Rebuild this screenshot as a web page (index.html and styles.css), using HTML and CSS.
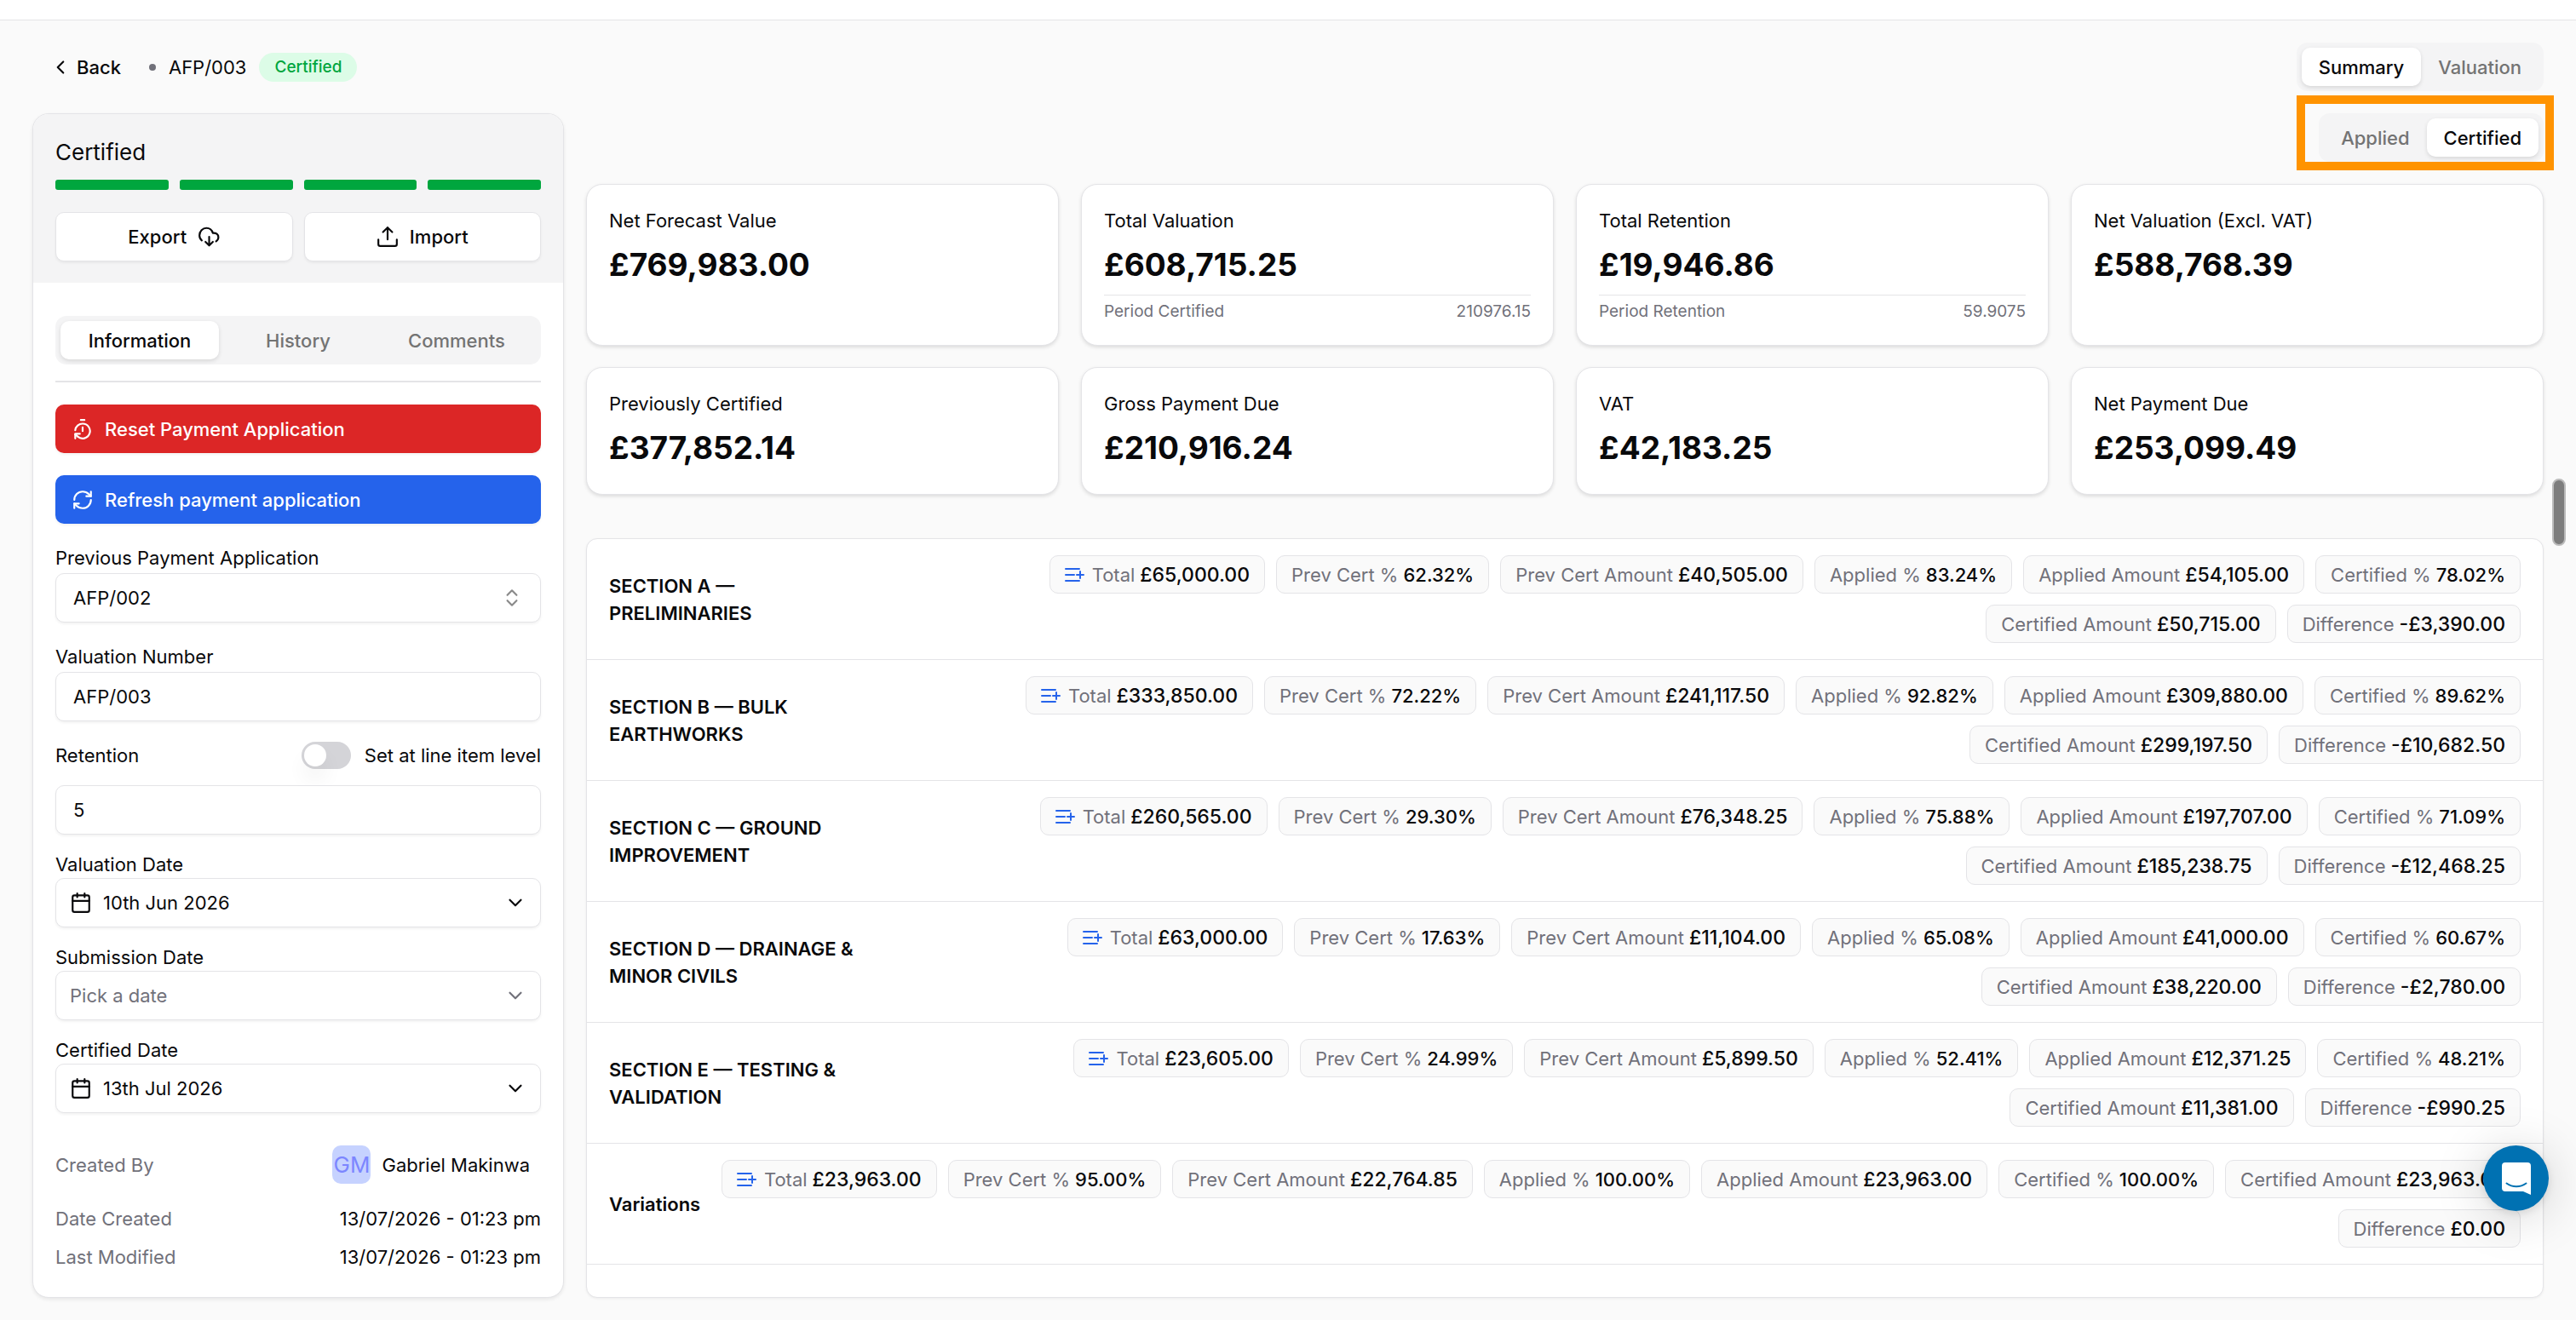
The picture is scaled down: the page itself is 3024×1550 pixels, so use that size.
FILE: index.html
```html
<!DOCTYPE html>
<html lang="en">
<head>
<meta charset="UTF-8">
<title>AFP/003 - Payment Application</title>
<link rel="stylesheet" href="styles.css">
</head>
<body>
<!-- shared icons -->
<svg class="sprite" aria-hidden="true">
	<symbol id="i-sum" viewBox="0 0 24 24"><path d="M1 5h16M1 12h10M1 19h16M18 8v8M14 12h8"/></symbol>
	<symbol id="i-down" viewBox="0 0 24 24"><path d="m6 9 6 6 6-6"/></symbol>
	<symbol id="i-cal" viewBox="0 0 24 24"><path d="M8 2v4M16 2v4M3 10h18"/><rect x="3" y="4" width="18" height="18" rx="2"/></symbol>
</svg>

<div class="topbar"></div>

<header class="head">
	<nav class="crumbs">
		<a href="#" class="back"><svg class="icon" viewBox="0 0 24 24"><path d="m15 18-6-6 6-6"/></svg>Back</a>
		<span class="dot"></span>
		<span>AFP/003</span>
		<span class="badge">Certified</span>
	</nav>
	<div class="seg">
		<button type="button" class="on">Summary</button>
		<button type="button">Valuation</button>
	</div>
</header>

<main class="page">
	<aside class="side">
		<div class="side-head">
			<h2>Certified</h2>
			<div class="steps"><i></i><i></i><i></i><i></i></div>
			<div class="pair">
				<button type="button" class="btn">Export
					<svg class="icon" viewBox="0 0 24 24"><path d="M12.500 12v9.500M8.500 17.500l4 4 4-4"/><path d="M4.500 16A7 7 0 0 1 2 10.500C2 6 5.500 2.500 9.500 2.500c3.500 0 6 2 7 5.500 3.500-.5 6 1.500 6 4.500 0 2-1 3.500-2.500 4.500"/></svg>
				</button>
				<button type="button" class="btn">
					<svg class="icon" viewBox="0 0 24 24"><path d="M12 15V2M7 7l5-5 5 5"/><path d="M2 15v5a2 2 0 0 0 2 2h16a2 2 0 0 0 2-2v-5"/></svg>
					Import
				</button>
			</div>
		</div>

		<div class="side-body">
			<div class="seg wide">
				<button type="button" class="on">Information</button>
				<button type="button">History</button>
				<button type="button">Comments</button>
			</div>
			<hr>
			<div class="actions">
				<button type="button" class="btn red">
					<svg class="icon" viewBox="0 0 24 24"><path d="M10 2h4M12 14v-4"/><path d="M4 13a8 8 0 0 1 8-7 8 8 0 1 1-5.300 14L4 17.600"/><path d="M9 17H4v5"/></svg>
					Reset Payment Application
				</button>
				<button type="button" class="btn blue">
					<svg class="icon" viewBox="0 0 24 24"><path d="M3 12a9 9 0 0 1 9-9 9.750 9.750 0 0 1 6.740 2.740L21 8"/><path d="M21 3v5h-5M21 12a9 9 0 0 1-9 9 9.750 9.750 0 0 1-6.740-2.740L3 16"/><path d="M8 16H3v5"/></svg>
					Refresh payment application
				</button>
			</div>

			<div class="field">
				<label for="prev">Previous Payment Application</label>
				<div class="control">
					<select id="prev"><option>AFP/002</option></select>
					<svg class="icon grey" viewBox="0 0 24 24"><path d="m7 15 5 5 5-5M7 9l5-5 5 5"/></svg>
				</div>
			</div>
			<div class="field">
				<label for="num">Valuation Number</label>
				<input id="num" class="control" type="text" value="AFP/003">
			</div>
			<div class="retention">
				<label for="ret">Retention</label>
				<input id="line" type="checkbox" class="switch">
				<label for="line">Set at line item level</label>
			</div>
			<input id="ret" class="control" type="text" value="5">

			<div class="date">
				<label for="vdate">Valuation Date</label>
				<button type="button" id="vdate" class="control"><svg class="icon"><use href="#i-cal"/></svg><span>10th Jun 2026</span><svg class="icon"><use href="#i-down"/></svg></button>
			</div>
			<div class="date">
				<label for="sdate">Submission Date</label>
				<button type="button" id="sdate" class="control empty"><span>Pick a date</span><svg class="icon"><use href="#i-down"/></svg></button>
			</div>
			<div class="date">
				<label for="cdate">Certified Date</label>
				<button type="button" id="cdate" class="control"><svg class="icon"><use href="#i-cal"/></svg><span>13th Jul 2026</span><svg class="icon"><use href="#i-down"/></svg></button>
			</div>

			<dl class="meta">
				<div class="by"><dt>Created By</dt><dd><span class="avatar">GM</span>Gabriel Makinwa</dd></div>
				<div><dt>Date Created</dt><dd>13/07/2026 - 01:23 pm</dd></div>
				<div><dt>Last Modified</dt><dd>13/07/2026 - 01:23 pm</dd></div>
			</dl>
		</div>
	</aside>

	<section class="content">
		<div class="mode">
			<div class="seg">
				<button type="button">Applied</button>
				<button type="button" class="on">Certified</button>
			</div>
			<div class="highlight"></div>
		</div>

		<div class="cards">
			<div class="card"><h3>Net Forecast Value</h3><strong>£769,983.00</strong></div>
			<div class="card"><h3>Total Valuation</h3><strong>£608,715.25</strong><p><span>Period Certified</span><span>210976.15</span></p></div>
			<div class="card"><h3>Total Retention</h3><strong>£19,946.86</strong><p><span>Period Retention</span><span>59.9075</span></p></div>
			<div class="card"><h3>Net Valuation (Excl. VAT)</h3><strong>£588,768.39</strong></div>
			<div class="card"><h3>Previously Certified</h3><strong>£377,852.14</strong></div>
			<div class="card"><h3>Gross Payment Due</h3><strong>£210,916.24</strong></div>
			<div class="card"><h3>VAT</h3><strong>£42,183.25</strong></div>
			<div class="card"><h3>Net Payment Due</h3><strong>£253,099.49</strong></div>
		</div>

		<div class="sections">
			<div class="row">
				<h4>SECTION A — PRELIMINARIES</h4>
				<ul>
					<li><svg class="sum"><use href="#i-sum"/></svg>Total <b class="amount">£65,000.00</b></li>
					<li>Prev Cert % <b>62.32%</b></li>
					<li>Prev Cert Amount <b class="amount">£40,505.00</b></li>
					<li>Applied % <b>83.24%</b></li>
					<li>Applied Amount <b class="amount">£54,105.00</b></li>
					<li>Certified % <b>78.02%</b></li>
					<li>Certified Amount <b class="amount">£50,715.00</b></li>
					<li>Difference <b class="amount">-£3,390.00</b></li>
				</ul>
			</div>
			<div class="row">
				<h4>SECTION B — BULK EARTHWORKS</h4>
				<ul>
					<li><svg class="sum"><use href="#i-sum"/></svg>Total <b class="amount">£333,850.00</b></li>
					<li>Prev Cert % <b>72.22%</b></li>
					<li>Prev Cert Amount <b class="amount">£241,117.50</b></li>
					<li>Applied % <b>92.82%</b></li>
					<li>Applied Amount <b class="amount">£309,880.00</b></li>
					<li>Certified % <b>89.62%</b></li>
					<li>Certified Amount <b class="amount">£299,197.50</b></li>
					<li>Difference <b class="amount">-£10,682.50</b></li>
				</ul>
			</div>
			<div class="row">
				<h4>SECTION C — GROUND IMPROVEMENT</h4>
				<ul>
					<li><svg class="sum"><use href="#i-sum"/></svg>Total <b class="amount">£260,565.00</b></li>
					<li>Prev Cert % <b>29.30%</b></li>
					<li>Prev Cert Amount <b class="amount">£76,348.25</b></li>
					<li>Applied % <b>75.88%</b></li>
					<li>Applied Amount <b class="amount">£197,707.00</b></li>
					<li>Certified % <b>71.09%</b></li>
					<li>Certified Amount <b class="amount">£185,238.75</b></li>
					<li>Difference <b class="amount">-£12,468.25</b></li>
				</ul>
			</div>
			<div class="row">
				<h4>SECTION D — DRAINAGE &amp; MINOR CIVILS</h4>
				<ul>
					<li><svg class="sum"><use href="#i-sum"/></svg>Total <b class="amount">£63,000.00</b></li>
					<li>Prev Cert % <b>17.63%</b></li>
					<li>Prev Cert Amount <b class="amount">£11,104.00</b></li>
					<li>Applied % <b>65.08%</b></li>
					<li>Applied Amount <b class="amount">£41,000.00</b></li>
					<li>Certified % <b>60.67%</b></li>
					<li>Certified Amount <b class="amount">£38,220.00</b></li>
					<li>Difference <b class="amount">-£2,780.00</b></li>
				</ul>
			</div>
			<div class="row">
				<h4>SECTION E — TESTING &amp; VALIDATION</h4>
				<ul>
					<li><svg class="sum"><use href="#i-sum"/></svg>Total <b class="amount">£23,605.00</b></li>
					<li>Prev Cert % <b>24.99%</b></li>
					<li>Prev Cert Amount <b class="amount">£5,899.50</b></li>
					<li>Applied % <b>52.41%</b></li>
					<li>Applied Amount <b class="amount">£12,371.25</b></li>
					<li>Certified % <b>48.21%</b></li>
					<li>Certified Amount <b class="amount">£11,381.00</b></li>
					<li>Difference <b class="amount">-£990.25</b></li>
				</ul>
			</div>
			<div class="row">
				<h4>Variations</h4>
				<ul>
					<li><svg class="sum"><use href="#i-sum"/></svg>Total <b class="amount">£23,963.00</b></li>
					<li>Prev Cert % <b>95.00%</b></li>
					<li>Prev Cert Amount <b class="amount">£22,764.85</b></li>
					<li>Applied % <b>100.00%</b></li>
					<li>Applied Amount <b class="amount">£23,963.00</b></li>
					<li>Certified % <b>100.00%</b></li>
					<li>Certified Amount <b class="amount">£23,963.00</b></li>
					<li>Difference <b class="amount">£0.00</b></li>
				</ul>
			</div>
		</div>
	</section>
</main>

<div class="thumb"></div>
<button type="button" class="chat" aria-label="Open chat">
	<svg viewBox="0 0 34 38"><path d="M4 0h26a4 4 0 0 1 4 4v34l-9-4H4a4 4 0 0 1-4-4V4a4 4 0 0 1 4-4z" fill="#fff"/><path d="M5.500 24.500c7 5 16 5 23 0" fill="none" stroke="#0071b2" stroke-width="2" stroke-linecap="round"/></svg>
</button>
</body>
</html>
```
FILE: styles.css
```css
* {
	box-sizing: border-box;
	margin: 0;
	padding: 0;
}
body {
	min-height: 100vh;
	display: flex;
	flex-direction: column;
	position: relative;
	background: #fafafa;
	color: #09090b;
	font: 22px/32px Inter, "Liberation Sans", sans-serif;
}
button, input, select {
	font: inherit;
	color: inherit;
	border: 0;
	background: none;
}
h2, h3 {
	font-weight: 400;
}
svg {
	fill: none;
	stroke: currentColor;
	stroke-width: 2;
	stroke-linecap: round;
	stroke-linejoin: round;
	flex: none;
}
.sprite {
	display: none;
}
.icon {
	width: 26px;
	height: 26px;
}
.grey {
	color: #8a8a8a;
}

/* header */
.topbar {
	height: 24px;
	background: #fff;
	border-bottom: 1px solid #e4e4e7;
}
.head {
	display: flex;
	justify-content: space-between;
	align-items: center;
	padding: 26px 38px 26px 58px;
}
.crumbs {
	display: flex;
	align-items: center;
	gap: 15px;
}
.back {
	display: flex;
	align-items: center;
	gap: 6px;
	margin-right: 18px;
	font-weight: 500;
	color: inherit;
	text-decoration: none;
}
.dot {
	width: 8px;
	height: 8px;
	border-radius: 50%;
	background: #71717a;
}
.badge {
	padding: 4px 18px;
	border-radius: 17px;
	background: #dcfce7;
	color: #00a63e;
	font-size: 19px;
	line-height: 26px;
	font-weight: 500;
}
.seg {
	display: flex;
	padding: 6px;
	border-radius: 13px;
	background: #f4f4f5;
}
.seg button {
	height: 45px;
	padding: 0 20px;
	border-radius: 10px;
	font-weight: 500;
	color: #737373;
}
.seg .on {
	background: #fff;
	color: #09090b;
	box-shadow: 0 2px 5px rgba(0,0,0,.12);
}
.wide button {
	flex: 1;
}

/* sidebar */
.page {
	flex: 1;
	display: flex;
	gap: 26px;
	padding: 0 38px 26px;
}
.side {
	width: 624px;
	flex: none;
	overflow: hidden;
	border: 1px solid #e4e4e7;
	border-radius: 19px;
	background: #fff;
	box-shadow: 0 2px 4px rgba(0,0,0,.08);
}
.side-head {
	padding: 26px 26px 25px;
	background: #f4f4f5;
}
.side-head h2 {
	font-size: 26px;
	line-height: 38px;
}
.steps {
	display: grid;
	grid-template-columns: repeat(4, 1fr);
	gap: 13px;
	margin: 13px 0 26px;
}
.steps i {
	height: 12px;
	border-radius: 3px;
	background: #00a63e;
}
.pair {
	display: grid;
	grid-template-columns: 1fr 1fr;
	gap: 13px;
}
.btn {
	display: flex;
	align-items: center;
	justify-content: center;
	gap: 13px;
	height: 58px;
	border: 1px solid #e4e4e7;
	border-radius: 10px;
	background: #fff;
	font-weight: 500;
	box-shadow: 0 2px 3px rgba(0,0,0,.05);
}
.side-body {
	display: flex;
	flex-direction: column;
	padding: 39px 26px 29px;
}
.side-body hr {
	height: 2px;
	margin: 19px 0 26px;
	border: 0;
	background: #e4e4e7;
}
.actions {
	display: flex;
	flex-direction: column;
	gap: 26px;
}
.actions .btn {
	justify-content: flex-start;
	height: 57px;
	padding: 0 19px;
	border: 0;
	color: #fff;
}
.actions .red {
	background: #dc2626;
}
.actions .blue {
	background: #2563eb;
}
.field {
	display: flex;
	flex-direction: column;
	gap: 2px;
	margin-top: 24px;
}
.control {
	display: flex;
	align-items: center;
	width: 100%;
	height: 58px;
	padding: 0 20px;
	border: 1px solid #e4e4e7;
	border-radius: 10px;
	background: #fff;
	box-shadow: 0 2px 3px rgba(0,0,0,.05);
}
.control select {
	flex: 1;
	appearance: none;
}
.retention {
	display: flex;
	align-items: center;
	gap: 16px;
	margin: 24px 0 19px;
}
.retention label:first-child {
	flex: 1;
}
.switch {
	appearance: none;
	width: 58px;
	height: 32px;
	padding: 3px;
	border-radius: 16px;
	background: #d4d4d8;
}
.switch::before {
	content: "";
	display: block;
	width: 26px;
	height: 26px;
	border-radius: 50%;
	background: #fff;
	box-shadow: 0 16px 24px rgba(0,0,0,.06);
}
.date {
	display: flex;
	flex-direction: column;
	margin-top: 19px;
}
.date .control {
	gap: 13px;
	padding: 0 16px;
	text-align: left;
}
.date span {
	flex: 1;
}
.empty {
	color: #71717a;
}
.meta {
	display: flex;
	flex-direction: column;
	gap: 13px;
	margin-top: 38px;
}
.meta div {
	display: flex;
	justify-content: space-between;
	align-items: center;
}
.meta .by {
	padding: 0 13px 12px 0;
}
.meta dt {
	color: #71717a;
}
.meta dd {
	display: flex;
	align-items: center;
	gap: 13px;
}
.avatar {
	width: 45px;
	border-radius: 10px;
	background: #c6d2ff;
	color: #7c86ff;
	font-size: 26px;
	line-height: 45px;
	text-align: center;
}

/* summary */
.content {
	flex: 1;
	min-width: 0;
	display: flex;
	flex-direction: column;
}
.mode {
	position: relative;
	align-self: flex-end;
}
.highlight {
	position: absolute;
	top: -21px;
	right: -12px;
	bottom: -10px;
	left: -26px;
	border: 10px solid #ff9300;
}
.cards {
	display: grid;
	grid-template-columns: repeat(4, 1fr);
	gap: 25px 26px;
	margin: 26px 0 51px;
}
.card {
	padding: 26px;
	border: 1px solid #e4e4e7;
	border-radius: 19px;
	background: #fff;
	box-shadow: 0 2px 4px rgba(0,0,0,.12);
}
.card h3 {
	font-size: 22px;
	margin-bottom: 7px;
}
.card strong {
	display: block;
	font-size: 37px;
	font-weight: 700;
	line-height: 57px;
}
.card p {
	display: flex;
	justify-content: space-between;
	margin-top: 7px;
	padding-top: 6px;
	border-top: 1px solid #e4e4e7;
	color: #71717a;
	font-size: 19px;
	line-height: 26px;
}
.sections {
	flex: 1;
	border: 1px solid #e4e4e7;
	border-radius: 13px;
	background: #fff;
	box-shadow: 0 1px 3px rgba(0,0,0,.06);
}
.row {
	display: flex;
	align-items: center;
	gap: 16px;
	padding: 19px 26px;
	border-bottom: 1px solid #e4e4e7;
}
.row h4 {
	max-width: 310px;
	font-size: 22px;
	font-weight: 600;
}
.row ul {
	flex: 1;
	display: flex;
	flex-wrap: wrap;
	justify-content: flex-end;
	gap: 13px;
	list-style: none;
}
.row li {
	display: flex;
	align-items: center;
	gap: 6px;
	height: 45px;
	padding: 0 17px;
	border: 1px solid #e4e4e7;
	border-radius: 10px;
	background: #fafafa;
	color: #71717a;
	white-space: nowrap;
}
.row b {
	color: #09090b;
	font-weight: 500;
}
.row .amount {
	font-size: 23px;
}
.sum {
	width: 24px;
	height: 24px;
	margin-right: 2px;
	color: #2563eb;
}

/* floating */
.thumb {
	position: absolute;
	top: 562px;
	right: 12px;
	width: 16px;
	height: 79px;
	border: 2px solid #bbb;
	border-radius: 8px;
	background: #7d7d7d;
}
.chat {
	position: absolute;
	right: 32px;
	bottom: 128px;
	width: 77px;
	height: 77px;
	border-radius: 50%;
	background: #0071b2;
	box-shadow: 0 3px 10px rgba(0,0,0,.1), 0 6px 60px rgba(0,0,0,.18);
}
.chat svg {
	width: 34px;
	height: 38px;
	stroke: none;
	vertical-align: middle;
}
```
